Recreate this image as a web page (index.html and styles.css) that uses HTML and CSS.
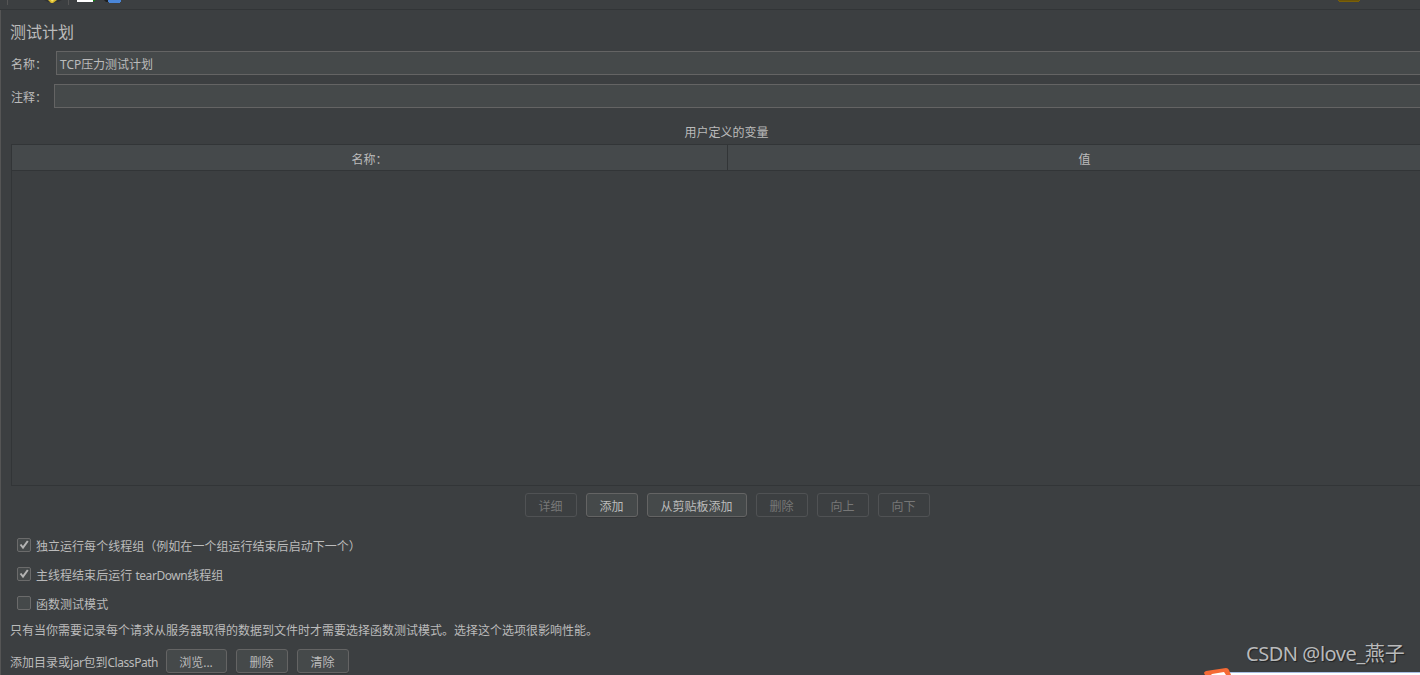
FILE: index.html
```
<!DOCTYPE html>
<html lang="zh-CN">
<head>
    <meta charset="UTF-8">
    <meta name="viewport" content="width=device-width, initial-scale=1.0">
    <title>测试计划</title>
    <link rel="stylesheet" href="styles.css">
</head>
<body>
    <div class="toolbar">
        <svg width="1420" height="9" viewBox="0 0 1420 9">
            <path d="M7.5 0V5M68.5 0V5" stroke="#555555"/>
            <path d="M44 0H62L58 2H48Z" fill="#303334"/>
            <path d="M48 0H57L53 3H51Z" fill="#d9b92c"/>
            <path d="M51 0H54L52 2Z" fill="#f7e36a"/>
            <path d="M77 0H93V2H77Z" fill="#ffffff"/>
            <path d="M93 0H95V1H93Z" fill="#0a8a0a"/>
            <path d="M104 0H108V2H106Z" fill="#1e2022"/>
            <path d="M108 0H121V2H120V3H109V2H108Z" fill="#4a86d8"/>
            <path d="M1338 0H1360V1H1359V2H1339V1H1338Z" fill="#7a6008"/>
            <path d="M1339 0H1359V1H1339Z" fill="#6b5307"/>
        </svg>
    </div>

    <div class="panel">
        <h1 class="title">测试计划</h1>

        <div class="field-row">
            <label class="field-label name-label">名称：</label>
            <div class="field">TCP压力测试计划</div>
        </div>
        <div class="field-row">
            <label class="field-label">注释：</label>
            <div class="field"></div>
        </div>

        <div class="table-title">用户定义的变量</div>
        <div class="table">
            <div class="table-head">
                <div class="cell">名称：</div>
                <div class="cell">值</div>
            </div>
        </div>

        <div class="table-buttons">
            <button class="btn" disabled>详细</button>
            <button class="btn">添加</button>
            <button class="btn btn-wide">从剪贴板添加</button>
            <button class="btn" disabled>删除</button>
            <button class="btn" disabled>向上</button>
            <button class="btn" disabled>向下</button>
        </div>

        <div class="options">
            <div class="option">
                <span class="check"><svg width="12" height="12" viewBox="0 0 12 12"><path d="M2.5 5.5L5 8.7L9.8 2"/></svg></span>
                <span class="option-text">独立运行每个线程组（例如在一个组运行结束后启动下一个）</span>
            </div>
            <div class="option">
                <span class="check"><svg width="12" height="12" viewBox="0 0 12 12"><path d="M2.5 5.5L5 8.7L9.8 2"/></svg></span>
                <span class="option-text">主线程结束后运行 <span class="latin">tearDown</span>线程组</span>
            </div>
            <div class="option">
                <span class="check"></span>
                <span class="option-text">函数测试模式</span>
            </div>
        </div>

        <p class="note">只有当你需要记录每个请求从服务器取得的数据到文件时才需要选择函数测试模式。选择这个选项很影响性能。</p>

        <div class="classpath">
            <span class="classpath-label">添加目录或<span class="latin">jar</span>包到<span class="latin">ClassPath</span></span>
            <button class="btn btn-browse">浏览...</button>
            <button class="btn">删除</button>
            <button class="btn">清除</button>
        </div>
    </div>

    <div class="watermark"><span>CSDN @love_</span>燕子</div>
    <svg class="popup-edge" width="216" height="8" viewBox="0 0 216 8">
        <path d="M24 5H216V8H24Z" fill="#ffffff"/>
        <path d="M26 5H216V6H26Z" fill="#a9bfe4"/>
        <path d="M0 6Q0 5 2 4L22 1Q24 1 25 3L27 8H1Z" fill="#f56a35"/>
        <path d="M7 8L8 7L20 5L22 8Z" fill="#ffffff"/>
    </svg>
</body>
</html>
```
FILE: styles.css
```
* {
    margin: 0;
    padding: 0;
    box-sizing: border-box;
}

body {
    width: 100%;
    height: 675px;
    overflow: hidden;
    background-color: #3c3f41;
    color: #bbbbbb;
    font-family: "Noto Sans", "Noto Sans CJK SC", sans-serif;
    font-size: 12px;
    line-height: 18px;
    white-space: nowrap;
}

.toolbar {
    height: 10px;
    border-bottom: 1px solid #323537;
    overflow: hidden;
}

.toolbar svg {
    display: block;
}

/* The panel runs past the right edge of the window */
.panel {
    width: 1442px;
    height: 665px;
    padding: 10px 0 0 10px;
    border-left: 1px solid #555555;
}

.title {
    height: 31px;
    font-size: 16px;
    font-weight: normal;
    line-height: 24px;
    text-indent: -1px;
}

.field-row {
    display: flex;
    align-items: center;
    height: 24px;
    margin-bottom: 9px;
}

.field-label {
    width: 43px;
    padding-top: 4px;
}

.name-label {
    width: 45px;
}

.field {
    flex: 1;
    height: 24px;
    padding-left: 3px;
    line-height: 25px;
    background-color: #45494a;
    border: 1px solid #646464;
    letter-spacing: -0.05px;
}

.table-title {
    height: 27px;
    padding-top: 7px;
    text-align: center;
}

.table {
    height: 342px;
    border: 1px solid #323537;
}

.table-head {
    display: flex;
    height: 26px;
    background-color: #45494b;
    border-bottom: 1px solid #323537;
}

.cell {
    width: 715px;
    line-height: 30px;
    text-align: center;
}

.cell + .cell {
    flex: 1;
    border-left: 1px solid #323537;
}

.table-buttons {
    display: flex;
    justify-content: center;
    gap: 9px;
    height: 24px;
    margin-top: 7px;
    padding-left: 2px;
}

.btn {
    width: 52px;
    height: 24px;
    background-color: #45494a;
    border: 1px solid #646464;
    border-radius: 3px;
    box-shadow: 0 1px 0 #353739;
    color: #bbbbbb;
    font: inherit;
    line-height: 18px;
    padding: 4px 1px 0 0;
}

.btn:disabled {
    background-color: transparent;
    border-color: #505254;
    box-shadow: none;
    color: #777777;
}

.btn-wide {
    width: 100px;
}

.btn-browse {
    width: 61px;
}

.options {
    display: flex;
    flex-direction: column;
    gap: 11px;
    margin-top: 19px;
    padding-left: 6px;
}

.option {
    display: flex;
    align-items: center;
    gap: 5px;
    height: 18px;
}

.option-text {
    padding-top: 3px;
    letter-spacing: 0.03px;
}

.check {
    width: 14px;
    height: 14px;
    margin-top: -1px;
    background-color: #45494a;
    border: 1px solid #6b6b6b;
    border-radius: 2px;
}

.check svg {
    display: block;
}

.check path {
    fill: none;
    stroke: #b4b4b4;
    stroke-width: 2;
}

.latin {
    letter-spacing: -0.45px;
}

.note {
    height: 18px;
    margin-top: 10px;
    text-indent: -1px;
}

.classpath {
    display: flex;
    align-items: center;
    gap: 9px;
    height: 24px;
    margin-top: 9px;
}

.classpath-label {
    width: 146px;
    padding-top: 3px;
    text-indent: -1px;
}

.watermark {
    position: absolute;
    left: 1246px;
    top: 639px;
    color: #b9babb;
    font-size: 20px;
    line-height: 30px;
    text-shadow: 1px 1px 1px #202224;
}

.watermark span {
    letter-spacing: -0.45px;
}

.popup-edge {
    position: absolute;
    left: 1204px;
    top: 667px;
}
```
